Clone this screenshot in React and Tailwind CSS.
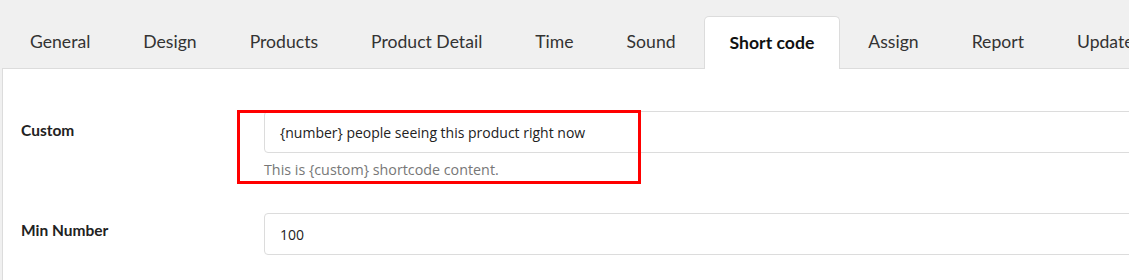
import React from "react";

const tabs = [
  "General",
  "Design",
  "Products",
  "Product Detail",
  "Time",
  "Sound",
  "Short code",
  "Assign",
  "Report",
  "Update",
];

export default function App() {
  return (
    <div className="w-[1129px] h-[280px] overflow-hidden bg-[#f0f0f0] font-['Lato',sans-serif]">
      <div className="w-[1400px]">
        <div className="flex items-end h-[68px] pl-[2px]">
          {tabs.map((t) => {
            const active = t === "Short code";
            return (
              <div
                key={t}
                className={
                  active
                    ? "ml-[3px] h-[53px] px-[25px] flex items-center bg-white border border-[#dcdcdc] border-b-0 rounded-t-[5px] text-[17.6px] font-bold text-[#111] relative top-[1px]"
                    : "ml-[3px] h-[52px] px-[25px] flex items-center text-[17.6px] text-[#333]"
                }
              >
                {t}
              </div>
            );
          })}
        </div>
        <div className="ml-[2px] bg-white border-t border-l border-[#dcdcdc] h-[212px] pt-[42px] pl-[18px]">
          <div className="relative flex">
            <div className="w-[243px] pt-[8px] text-[15.5px] font-bold text-[#222]">Custom</div>
            <div className="flex flex-col">
              <div className="w-[1000px] h-[42px] border border-[#dcdcdc] rounded-[4px] flex items-center pl-[15px] font-['Open_Sans',sans-serif] text-[14px] text-[#222]">
                {"{number} people seeing this product right now"}
              </div>
              <div className="mt-[7px] font-['Open_Sans',sans-serif] text-[14.3px] text-[#777] leading-[20px]">
                {"This is {custom} shortcode content."}
              </div>
            </div>
            <div className="absolute left-[216px] top-[-1px] w-[404px] h-[74px] border-[3px] border-[#ff0000]" />
          </div>
          <div className="flex mt-[33px]">
            <div className="w-[243px] pt-[6px] text-[15.5px] font-bold text-[#222]">Min Number</div>
            <div className="w-[1000px] h-[42px] border border-[#dcdcdc] rounded-[4px] flex items-center pl-[15px] font-['Open_Sans',sans-serif] text-[14px] text-[#222]">
              100
            </div>
          </div>
        </div>
      </div>
    </div>
  );
}
